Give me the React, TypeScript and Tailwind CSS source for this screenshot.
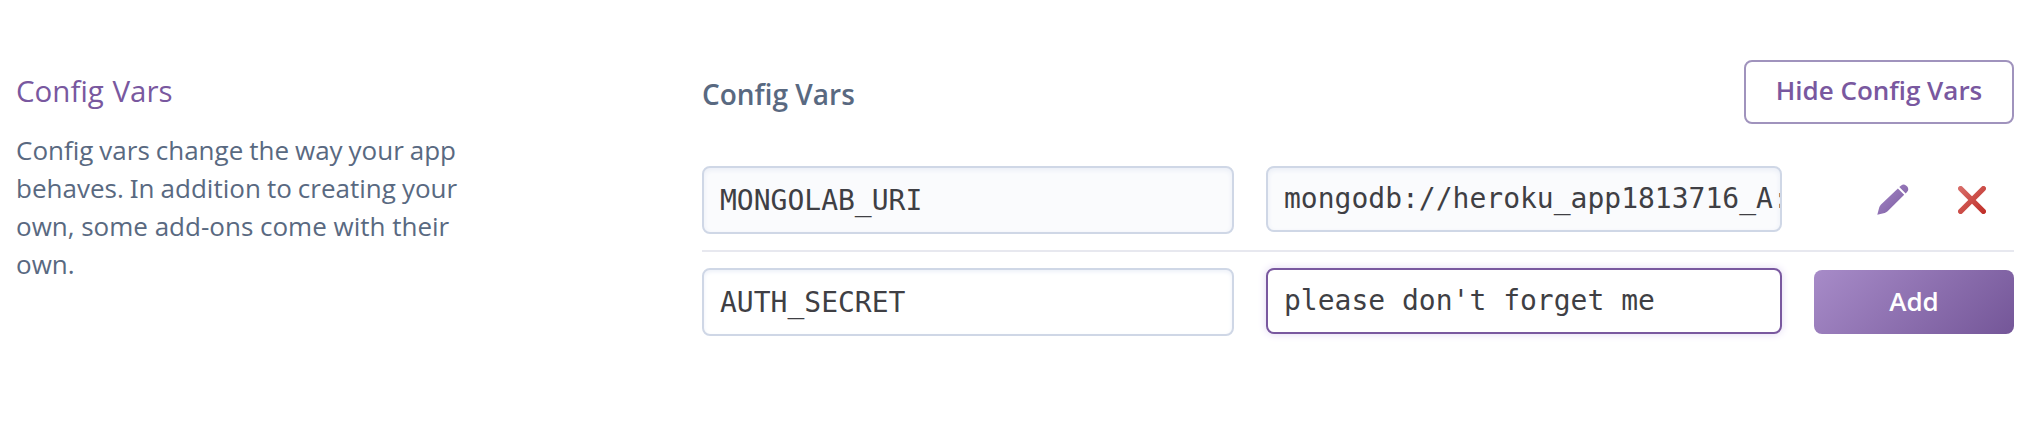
import type { ReactNode } from 'react';

function PencilIcon() {
  return (
    <svg viewBox="0 0 32 32" className="block h-8 w-8" aria-hidden="true">
      <defs>
        <linearGradient id="pencil-fill" x1="0" y1="0" x2="1" y2="1">
          <stop offset="0" stopColor="#a78bc8" />
          <stop offset="1" stopColor="#79589f" />
        </linearGradient>
      </defs>
      <path
        fill="url(#pencil-fill)"
        d="M0.3 30.8 L2.2 23.6 Q2.7 21.8 4 20.5 L20.9 4.4 L27.2 10.7 L10.6 27.2 Q9.2 28.4 7.6 28.9 Z M22.3 3 L24.2 1.4 Q26.6 -0.6 29 1.4 L30.2 2.6 Q32.2 5 30.4 7.4 L28.7 9.4 Z"
      />
    </svg>
  );
}

function CrossIcon() {
  return (
    <svg viewBox="0 0 28 28" className="block h-7 w-7" aria-hidden="true">
      <defs>
        <linearGradient id="cross-stroke" gradientUnits="userSpaceOnUse" x1="0" y1="0" x2="28" y2="28">
          <stop offset="0" stopColor="#d9706c" />
          <stop offset="1" stopColor="#bf2c25" />
        </linearGradient>
      </defs>
      <path d="M2.6 2.6 L25.4 25.4 M25.4 2.6 L2.6 25.4" stroke="url(#cross-stroke)" strokeWidth="5.2" strokeLinecap="round" />
    </svg>
  );
}

const fieldBase =
  "overflow-hidden whitespace-pre rounded-lg border-2 font-['DejaVu_Sans_Mono',monospace] text-[28px] leading-[34px] text-[#3f3f44]";

function Field({ className, children }: { className: string; children: ReactNode }) {
  return <div className={`${fieldBase} ${className}`}>{children}</div>;
}

export default function App() {
  return (
    <main className="flex h-[438px] w-[2042px] bg-white pl-4 font-['Open_Sans','Noto_Sans',sans-serif]">
      <aside className="w-[686px] pt-[70px]">
        <h2 className="text-[29.5px] leading-[42px] [word-spacing:1px] text-[#79589f]">Config Vars</h2>
        <p className="mt-[19px] w-[460px] whitespace-nowrap text-[26px] leading-[38px] text-[#596981]">
          <span className="[word-spacing:-0.8px]">Config vars change the way your app</span>
          <br />
          <span className="[word-spacing:-0.7px]">
            behaves. <span className="font-['Noto_Sans']">I</span>n addition to creating your
          </span>
          <br />
          own, some add-ons come with their
          <br />
          own.
        </p>
      </aside>

      <section className="w-[1312px] pt-[60px]">
        <header className="flex h-16 items-start justify-between">
          <h3 className="pt-[13px] text-[28px] font-semibold leading-[42px] text-[#596981]">Config Vars</h3>
          <button className="h-16 w-[270px] rounded-lg border-2 border-[#a093bd] pb-1 text-[26px] font-semibold leading-[38px] text-[#79589f]">
            Hide Config Vars
          </button>
        </header>

        <div className="mt-[42px] flex h-[86px] items-start border-b-2 border-[#e7e8ef]">
          <Field className="h-[68px] w-[532px] border-[#cfd7e6] bg-[#fafbfd] py-4 pl-4 shadow-[inset_0_2px_5px_#e9edf6]">
            MONGOLAB_URI
          </Field>
          <Field className="ml-8 h-[66px] w-[516px] border-[#cfd7e6] bg-[#fafbfd] py-[14px] pl-4 shadow-[inset_0_2px_5px_#e9edf6]">
            mongodb://heroku_app1813716_A:
          </Field>
          <div className="ml-[95px] flex h-[68px] items-center gap-[49px]">
            <PencilIcon />
            <CrossIcon />
          </div>
        </div>

        <div className="mt-4 flex items-start">
          <Field className="h-[68px] w-[532px] border-[#cfd7e6] bg-white py-4 pl-4 shadow-[inset_0_2px_4px_#edf1f9]">
            AUTH_SECRET
          </Field>
          <Field className="ml-8 h-[66px] w-[516px] border-[#79589f] bg-white py-[14px] pl-4 shadow-[0_0_8px_#e0d6f2]">
            please don't forget me
          </Field>
          <button className="ml-8 mt-0.5 h-16 w-[200px] rounded-lg bg-linear-[135deg] from-[#a78bc8] to-[#745698] pb-0.5 text-[26px] font-semibold leading-[38px] text-white">
            Add
          </button>
        </div>
      </section>
    </main>
  );
}
